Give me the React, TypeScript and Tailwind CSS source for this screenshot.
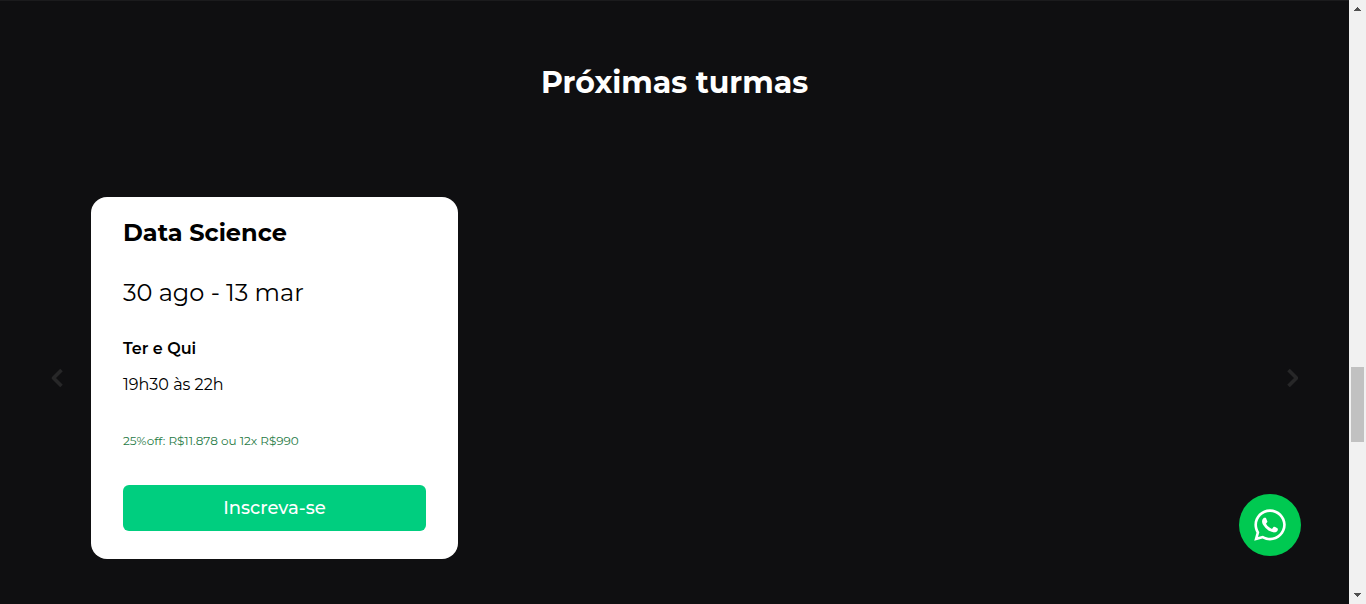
import { FaWhatsapp } from "react-icons/fa";

type Turma = {
  curso: string;
  periodo: string;
  dias: string;
  horario: string;
  preco: string;
};

const turmas: Turma[] = [
  {
    curso: "Data Science",
    periodo: "30 ago - 13 mar",
    dias: "Ter e Qui",
    horario: "19h30 às 22h",
    preco: "25%off: R$11.878 ou 12x R$990",
  },
];

function Arrow({ direction }: { direction: "left" | "right" }) {
  return (
    <button
      type="button"
      disabled
      aria-label={direction === "left" ? "Anterior" : "Próximo"}
      className="flex h-10 w-6 shrink-0 items-center justify-center text-[#272728]"
    >
      <svg width="12" height="20" viewBox="0 0 12 20" fill="none" stroke="currentColor" strokeWidth="3.6">
        <path d={direction === "left" ? "M10.5 2 2.5 10l8 8" : "M2.5 2l8 8-8 8"} strokeLinejoin="round" />
      </svg>
    </button>
  );
}

function TurmaCard({ turma }: { turma: Turma }) {
  return (
    <article className="flex flex-col rounded-2xl bg-white px-8 pt-5 pb-7 text-black">
      <h3 className="text-2xl leading-8 font-bold">{turma.curso}</h3>
      <p className="mt-7 text-2xl leading-8 font-normal">{turma.periodo}</p>
      <p className="mt-7 text-base leading-6 font-semibold">{turma.dias}</p>
      <p className="mt-3 text-base leading-6 font-normal">{turma.horario}</p>
      <p className="mt-[34px] text-xs leading-5 font-normal text-[#1f7a45]">{turma.preco}</p>
      <a
        href="#inscricao"
        className="mt-[34px] flex h-[46px] items-center justify-center rounded-md bg-[#00ce7f] text-lg font-medium text-white"
      >
        Inscreva-se
      </a>
    </article>
  );
}

function Scrollbar() {
  return (
    <div aria-hidden="true" className="flex w-[17px] shrink-0 flex-col items-center bg-[#f1f1f1]">
      <svg width="17" height="17" viewBox="0 0 17 17" fill="#505050" shapeRendering="crispEdges">
        <path d="M8 7h1v1h1v1h1v1h1v1H5v-1h1V9h1V8h1z" />
      </svg>
      <div className="grow-[350]" />
      <div className="h-[75px] w-[13px] bg-[#c1c1c1]" />
      <div className="grow-[145]" />
      <svg width="17" height="17" viewBox="0 0 17 17" fill="#505050" shapeRendering="crispEdges">
        <path d="M5 6h7v1h-1v1h-1v1H9v1H8V9H7V8H6V7H5z" />
      </svg>
    </div>
  );
}

export default function App() {
  return (
    <div className="flex min-h-screen bg-[#0f0f11] font-['Montserrat','Inter',sans-serif]">
      <main className="min-w-0 flex-1 border-t border-[#1b1b1d] pb-11">
        <section>
          <h2 className="pt-[62px] text-center text-3xl leading-10 font-bold text-white">
            Próximas turmas
          </h2>
          <div className="mt-[94px] flex items-center px-[45px]">
            <Arrow direction="left" />
            <div className="mx-[22px] grid flex-1 grid-cols-3 gap-[33px]">
              {turmas.map((turma) => (
                <TurmaCard key={turma.curso} turma={turma} />
              ))}
            </div>
            <Arrow direction="right" />
          </div>
        </section>
      </main>
      <a
        href="#whatsapp"
        aria-label="WhatsApp"
        className="fixed right-[65px] bottom-12 flex size-[62px] items-center justify-center rounded-full bg-[#00c951] text-white"
      >
        <FaWhatsapp size={36} />
      </a>
      <Scrollbar />
    </div>
  );
}
